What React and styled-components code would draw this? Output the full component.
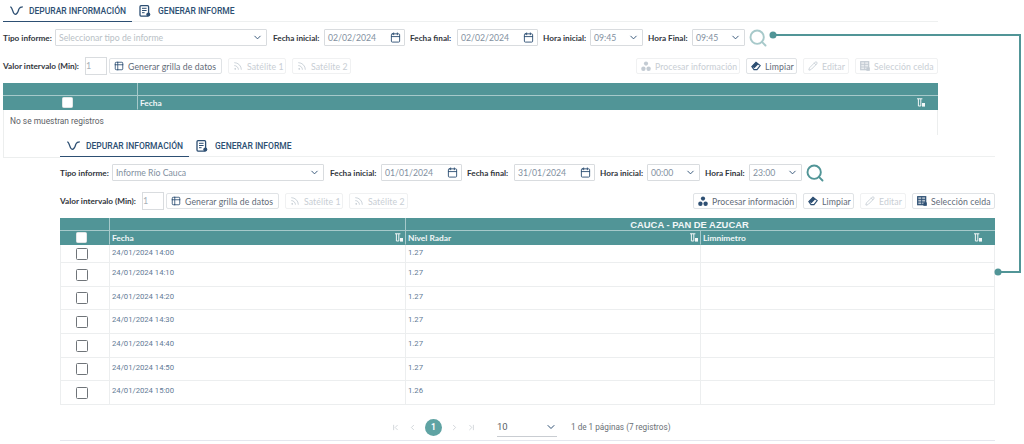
import { Fragment } from "react";
import styled, { createGlobalStyle } from "styled-components";
import {
  Calendar,
  ChevronDown,
  ChevronLeft,
  ChevronRight,
  ChevronFirst,
  ChevronLast,
  Pencil,
  Rss,
  Search,
  Table2,
} from "lucide-react";

const teal = "#519597";
const navy = "#2d4f73";

const GlobalStyle = createGlobalStyle`
  html, body {
    margin: 0;
    padding: 0;
    background: #fff;
  }
  * {
    box-sizing: border-box;
  }
`;

const Page = styled.div`
  position: relative;
  width: 1024px;
  height: 444px;
  overflow: hidden;
  background: #fff;
  font-family: "Lato", "Open Sans", sans-serif;
  padding-left: 3px;
`;

const Panel = styled.section`
  width: 935px;
  background: #fff;
  ${({ $front }) =>
    $front &&
    `
    position: absolute;
    left: 60px;
    top: 135px;
    height: 306px;
    border-bottom: 1px solid #e4e6ee;
  `}
`;

const Tabs = styled.nav`
  display: flex;
  height: 22px;
  border-bottom: 1px solid #eef0f0;
  align-items: stretch;
`;

const Tab = styled.div`
  display: flex;
  align-items: center;
  gap: ${({ $active }) => ($active ? 6 : 7)}px;
  padding: 0 6px 0 7px;
  font-family: "Roboto", sans-serif;
  font-weight: 500;
  font-size: 8.5px;
  color: ${navy};
  margin-bottom: -1px;
  border-bottom: 1px solid ${({ $active }) => ($active ? navy : "transparent")};
`;

const FilterRow = styled.div`
  display: flex;
  align-items: center;
  height: 17px;
  margin-top: 7px;
`;

const Label = styled.label`
  font-size: 8.2px;
  font-weight: 700;
  color: #30353b;
  white-space: nowrap;
  width: ${({ $w }) => $w}px;
  margin-left: ${({ $ml }) => $ml || 0}px;
  flex: none;
`;

const Field = styled.div`
  display: flex;
  align-items: center;
  justify-content: space-between;
  flex: none;
  width: ${({ $w }) => $w}px;
  height: 17px;
  border: 1px solid #d9dcdf;
  border-radius: 1px;
  padding: 0 3px;
  font-size: 8.7px;
  color: ${({ $muted }) => ($muted ? "#b9bfc6" : "#8290a0")};
  svg {
    flex: none;
    color: ${navy};
  }
`;

const SearchButton = styled.div`
  display: flex;
  margin-left: 3px;
  color: ${teal};
  opacity: ${({ $off }) => ($off ? 0.5 : 1)};
`;

const ActionRow = styled.div`
  display: flex;
  align-items: center;
  height: 18px;
  margin-top: 11px;
`;

const IntervalInput = styled.div`
  width: 22px;
  height: 18px;
  margin-left: 4px;
  margin-right: 2px;
  border: 1px solid #d9dcdf;
  font-size: 9px;
  line-height: 16px;
  color: #a8b0b8;
  flex: none;
`;

const Actions = styled.div`
  display: flex;
  gap: 6px;
  &:last-child {
    margin-left: auto;
  }
`;

const Btn = styled.button`
  display: flex;
  align-items: center;
  gap: 4px;
  flex: none;
  width: ${({ $w }) => $w}px;
  height: 16px;
  padding: 0 0 0 4px;
  font-family: inherit;
  font-size: 8.7px;
  letter-spacing: 0.1px;
  background: #fff;
  border: 1px solid ${({ disabled }) => (disabled ? "#f0f1f2" : "#e0e3e6")};
  border-radius: 2px;
  color: ${({ disabled }) => (disabled ? "#c8ced4" : "#5f6b78")};
  white-space: nowrap;
  svg {
    color: ${({ disabled }) => (disabled ? "#c3cbd3" : navy)};
    flex: none;
  }
`;

const Grid = styled.div`
  display: grid;
  grid-template-columns: ${({ $cols }) => $cols};
  margin-top: 8px;
`;

const HeadCell = styled.div`
  display: flex;
  align-items: center;
  justify-content: ${({ $center }) => ($center ? "center" : "space-between")};
  grid-column: ${({ $span }) => $span || "auto"};
  height: ${({ $line }) => ($line ? 13 : 14)}px;
  background: ${teal};
  color: #f2f7f7;
  font-size: 8.4px;
  font-weight: 700;
  padding: 0 ${({ $pr }) => $pr || 2}px 0 2px;
  border-left: ${({ $first }) => ($first ? "none" : "1px solid #a6c9ca")};
  border-bottom: 1px solid ${({ $line }) => ($line ? "#a6c9ca" : teal)};
`;

const TitleCell = styled(HeadCell)`
  font-family: "Liberation Sans", sans-serif;
  font-size: 9.4px;
  padding-right: 24px;
`;

const CheckHead = styled(HeadCell)`
  justify-content: flex-start;
  padding-left: ${({ $inset }) => $inset}px;
`;

const BodyCell = styled.div`
  height: ${({ $h }) => $h}px;
  padding: ${({ $h }) => ($h < 20 ? 2 : 4)}px 2px 0;
  font-family: "Roboto", sans-serif;
  font-size: 7.7px;
  line-height: 12px;
  color: #5f7a96;
  border-bottom: 1px solid #eceeef;
  border-left: 1px solid #eceeef;
  border-right: ${({ $last }) => ($last ? "1px solid #eceeef" : "none")};
`;

const CheckCell = styled(BodyCell)`
  display: flex;
  align-items: center;
  padding: 0 0 0 15px;
`;

const CheckBox = styled.span`
  display: block;
  flex: none;
  width: ${({ $head }) => ($head ? 11 : 12)}px;
  height: ${({ $head }) => ($head ? 11 : 12)}px;
  background: #fff;
  border-radius: 1.5px;
  border: 1px solid ${({ $head }) => ($head ? "#e3e6e6" : "#6f7479")};
`;

const Empty = styled.p`
  margin: 0;
  height: 48px;
  padding: 5px 6px;
  font-family: "Roboto", sans-serif;
  font-size: 8.4px;
  line-height: 12px;
  color: #5c6166;
  border: 1px solid #eceeee;
  border-top: none;
`;

const Pagination = styled.footer`
  display: flex;
  align-items: center;
  height: 35px;
  padding: 9px 0 0 331px;
  font-family: "Roboto", sans-serif;
  font-size: 8.2px;
  color: #6a7076;
`;

const PageNav = styled.div`
  display: flex;
  align-items: center;
  gap: 8px;
  color: #c6cbd0;
`;

const PageDot = styled.span`
  display: flex;
  align-items: center;
  justify-content: center;
  width: 17px;
  height: 17px;
  border-radius: 50%;
  background: #5fa3a3;
  color: #fff;
  font-weight: 700;
  font-size: 8.5px;
`;

const PageSize = styled.div`
  display: flex;
  align-items: center;
  justify-content: space-between;
  width: 60px;
  height: 20px;
  margin: 0 14px 0 21px;
  border-bottom: 1px solid #c9cdd2;
  font-size: 9.5px;
  color: #5b6167;
  svg {
    color: ${navy};
  }
`;

const Connector = styled.svg`
  position: absolute;
  left: 0;
  top: 0;
  pointer-events: none;
`;

const DepurarIcon = () => (
  <svg width="13" height="9" viewBox="0 0 13 9" fill="none" stroke={navy} strokeWidth="1.3">
    <path d="M0.3 0.8 C2.6 1 2.6 8.3 5.2 8.3 C8 8.3 8.4 4 9 2.8 C9.6 1.5 10.8 0.8 12.8 0.8" />
  </svg>
);

const InformeIcon = () => (
  <svg width="12" height="12" viewBox="0 0 12 12" fill="none">
    <rect x="1" y="0.7" width="8.6" height="10.4" rx="1" stroke={navy} strokeWidth="1.3" />
    <path d="M3 3.3h4.6M3 5.5h4.6M3 7.7h2.6" stroke={navy} strokeWidth="1" />
    <circle cx="9.3" cy="9.6" r="2" fill={navy} />
  </svg>
);

const FilterIcon = () => (
  <svg width="8" height="9" viewBox="0 0 8 9" fill="none" stroke="#f2f7f7" strokeWidth="1">
    <path d="M0 0.8h5.4M1.4 0.8v7.2h2.4V0.8" />
    <rect x="5" y="5" width="3" height="3.6" fill="#f2f7f7" stroke="none" />
  </svg>
);

const ProcessIcon = () => (
  <svg width="10" height="11" viewBox="0 0 10 11" fill="currentColor">
    <circle cx="5" cy="2.6" r="2.1" />
    <circle cx="2.4" cy="7.8" r="2.2" />
    <circle cx="7.6" cy="7.8" r="2.2" />
  </svg>
);

const EraseIcon = () => (
  <svg width="10" height="10" viewBox="0 0 10 10" fill="none" stroke="currentColor" strokeWidth="1.1">
    <path d="M0.8 5.6 L5 1.2 L9.2 4.6 L6 8.6 H3 Z" />
    <path d="M0.8 5.6 L5 1.2 L7.4 3.2 L3.4 7.2 Z" fill="currentColor" stroke="none" />
  </svg>
);

const CellIcon = () => (
  <svg width="10" height="10" viewBox="0 0 10 10" fill="none" stroke="currentColor">
    <rect x="0.7" y="0.7" width="8" height="8" fill="currentColor" fillOpacity="0.35" strokeWidth="1.2" />
    <path d="M0.7 3.4h8M0.7 6h8M4.7 0.7v8" strokeWidth="0.9" />
    <rect x="6.4" y="6.4" width="3.4" height="3.4" fill="currentColor" stroke="none" />
  </svg>
);

const rows = [
  ["24/01/2024 14:00", "1.27", 18],
  ["24/01/2024 14:10", "1.27", 24],
  ["24/01/2024 14:20", "1.27", 23],
  ["24/01/2024 14:30", "1.27", 24],
  ["24/01/2024 14:40", "1.27", 24],
  ["24/01/2024 14:50", "1.27", 23],
  ["24/01/2024 15:00", "1.26", 24],
];

const Toolbar = ({ tipo, inicio, fin, horaIni, horaFin, empty }) => (
  <>
    <FilterRow>
      <Label $w={52}>Tipo informe:</Label>
      <Field $w={212} $muted={empty}>
        {tipo}
        <ChevronDown size={11} />
      </Field>
      <Label $w={51} $ml={6}>Fecha inicial:</Label>
      <Field $w={81}>
        {inicio}
        <Calendar size={11} />
      </Field>
      <Label $w={47} $ml={5}>Fecha final:</Label>
      <Field $w={81}>
        {fin}
        <Calendar size={11} />
      </Field>
      <Label $w={47} $ml={5}>Hora inicial:</Label>
      <Field $w={53}>
        {horaIni}
        <ChevronDown size={11} />
      </Field>
      <Label $w={44} $ml={5}>Hora Final:</Label>
      <Field $w={53}>
        {horaFin}
        <ChevronDown size={11} />
      </Field>
      <SearchButton $off={empty}>
        <Search size={20} strokeWidth={2.3} />
      </SearchButton>
    </FilterRow>
    <ActionRow>
      <Label $w={78}>Valor intervalo (Min):</Label>
      <IntervalInput>1</IntervalInput>
      <Actions>
        <Btn $w={113}>
          <Table2 size={10} />
          Generar grilla de datos
        </Btn>
        <Btn $w={58} disabled>
          <Rss size={10} />
          Satélite 1
        </Btn>
        <Btn $w={59} disabled>
          <Rss size={10} />
          Satélite 2
        </Btn>
      </Actions>
      <Actions>
        <Btn $w={104} disabled={empty}>
          <ProcessIcon />
          Procesar información
        </Btn>
        <Btn $w={51}>
          <EraseIcon />
          Limpiar
        </Btn>
        <Btn $w={46} disabled>
          <Pencil size={10} />
          Editar
        </Btn>
        <Btn $w={83} disabled={empty}>
          <CellIcon />
          Selección celda
        </Btn>
      </Actions>
    </ActionRow>
  </>
);

const TabBar = () => (
  <Tabs>
    <Tab $active>
      <DepurarIcon />
      DEPURAR INFORMACIÓN
    </Tab>
    <Tab>
      <InformeIcon />
      GENERAR INFORME
    </Tab>
  </Tabs>
);

export default function App() {
  return (
    <Page>
      <GlobalStyle />
      <Panel>
        <TabBar />
        <Toolbar
          empty
          tipo="Seleccionar tipo de informe"
          inicio="02/02/2024"
          fin="02/02/2024"
          horaIni="09:45"
          horaFin="09:45"
        />
        <Grid $cols="134px 1fr">
          <HeadCell $first $line />
          <HeadCell $line />
          <CheckHead $first $inset={59}>
            <CheckBox $head />
          </CheckHead>
          <HeadCell $pr={13}>
            Fecha
            <FilterIcon />
          </HeadCell>
        </Grid>
        <Empty>No se muestran registros</Empty>
      </Panel>

      <Panel $front>
        <TabBar />
        <Toolbar
          tipo="Informe Río Cauca"
          inicio="01/01/2024"
          fin="31/01/2024"
          horaIni="00:00"
          horaFin="23:00"
        />
        <Grid $cols="49px 296px 295px 295px">
          <HeadCell $first $line />
          <HeadCell $line />
          <TitleCell $span="span 2" $line $center>
            CAUCA - PAN DE AZUCAR
          </TitleCell>
          <CheckHead $first $inset={16}>
            <CheckBox $head />
          </CheckHead>
          <HeadCell>
            Fecha
            <FilterIcon />
          </HeadCell>
          <HeadCell>
            Nivel Radar
            <FilterIcon />
          </HeadCell>
          <HeadCell $pr={13}>
            Limnimetro
            <FilterIcon />
          </HeadCell>
          {rows.map(([fecha, nivel, h]) => (
            <Fragment key={fecha}>
              <CheckCell $h={h}>
                <CheckBox />
              </CheckCell>
              <BodyCell $h={h}>{fecha}</BodyCell>
              <BodyCell $h={h}>{nivel}</BodyCell>
              <BodyCell $h={h} $last />
            </Fragment>
          ))}
        </Grid>
        <Pagination>
          <PageNav>
            <ChevronFirst size={9} />
            <ChevronLeft size={9} />
            <PageDot>1</PageDot>
            <ChevronRight size={9} />
            <ChevronLast size={9} />
          </PageNav>
          <PageSize>
            10
            <ChevronDown size={12} />
          </PageSize>
          1 de 1 páginas (7 registros)
        </Pagination>
      </Panel>

      <Connector width="1024" height="444" viewBox="0 0 1024 444" fill="none">
        <path d="M773 35H1020V272H998" stroke={teal} strokeWidth="2" />
        <circle cx="773" cy="35" r="3.5" fill={teal} />
        <circle cx="998" cy="272" r="3.5" fill={teal} />
      </Connector>
    </Page>
  );
}
